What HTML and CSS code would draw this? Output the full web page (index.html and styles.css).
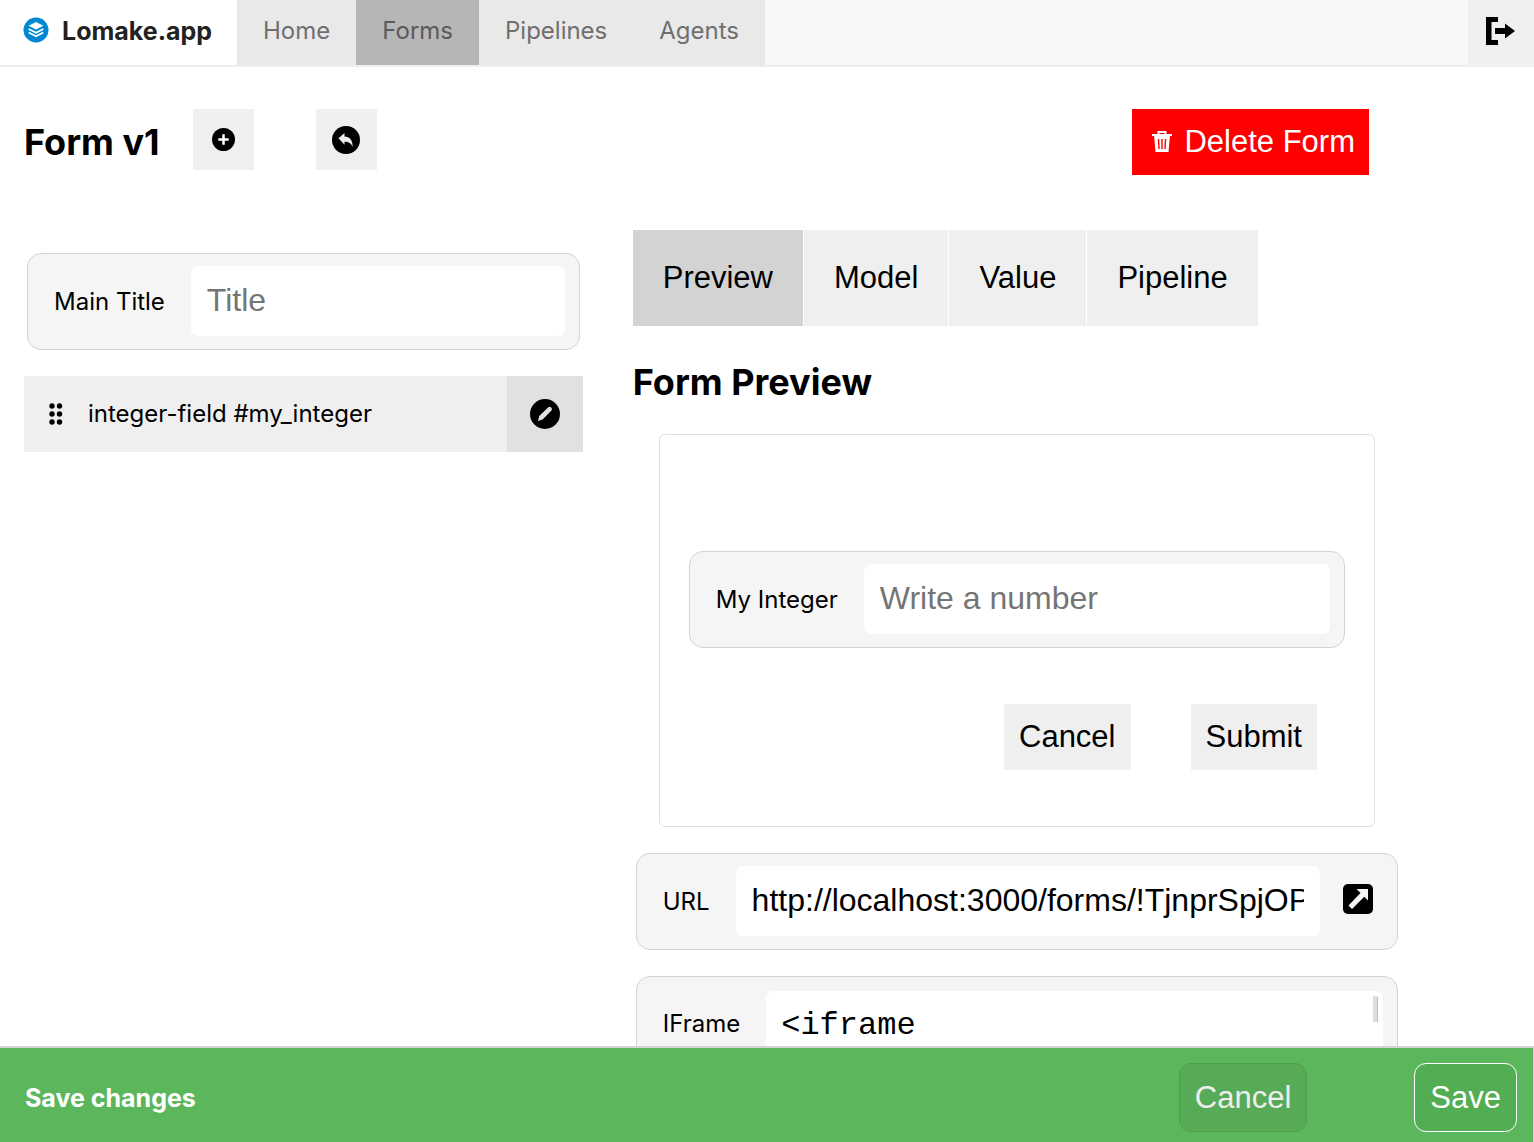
FILE: index.html
```html
<!DOCTYPE html>
<html lang="en">
<head>
<meta charset="utf-8">
<meta name="viewport" content="width=device-width, initial-scale=1">
<title>Lomake.app</title>
<link rel="stylesheet" href="styles.css">
</head>
<body>
<header class="topbar">
  <a class="brand" href="#">
    <svg class="brand-icon" viewBox="0 0 26 26" aria-hidden="true">
      <circle cx="13" cy="13" r="12.5" fill="#0288d1"/>
      <path d="M13 5l7.300 3.800L13 12.600 5.700 8.800z" fill="#fff"/>
      <path d="M5.700 12l7.300 3.800 7.300-3.800M5.700 15.500l7.300 3.800 7.300-3.800" fill="none" stroke="#fff" stroke-width="1.600"/>
    </svg>
    <span>Lomake.app</span>
  </a>
  <nav class="nav">
    <a href="#">Home</a>
    <a class="current" href="#" aria-current="page">Forms</a>
    <a href="#">Pipelines</a>
    <a href="#">Agents</a>
  </nav>
  <button class="logout" type="button" aria-label="Log out">
    <svg viewBox="0 0 30 30" width="30" height="30" aria-hidden="true">
      <path d="M12 1H0v28h12v-5H5.500V6H12zM9 12h10V7.500L29 15l-10 7.500V18H9z"/>
    </svg>
  </button>
</header>

<main class="page">
  <div class="titlebar">
    <h1>Form v1</h1>
    <button class="square add" type="button" aria-label="Add">
      <svg viewBox="0 0 22 22" width="23" height="23" aria-hidden="true">
        <circle cx="11" cy="11" r="11"/>
        <path d="M11 6v10M6 11h10" stroke="#fff" stroke-width="2.400"/>
      </svg>
    </button>
    <button class="square undo" type="button" aria-label="Undo">
      <svg viewBox="0 0 28 28" width="28" height="28" aria-hidden="true">
        <circle cx="14" cy="14" r="14"/>
        <path d="M6.500 12.300L12.500 7v3.500c5 .2 8.500 3.500 8 10.500-1.200-3.800-3.500-5.200-8-5.200v3z" fill="#efefef"/>
      </svg>
    </button>
    <button class="delete" type="button">
      <svg viewBox="0 0 22 24" width="22" height="24" aria-hidden="true">
        <path d="M1 5h20M7.500 4V2h7v2" fill="none" stroke="#fff" stroke-width="2"/>
        <path d="M3 5h16l-1.500 17h-13z" fill="#fff"/>
        <path d="M7.500 9l.5 10M11 9v10M14.500 9l-.5 10" stroke="red" stroke-width="1.400"/>
      </svg>
      <span>Delete Form</span>
    </button>
  </div>

  <div class="columns">
    <section class="editor">
      <div class="field">
        <label for="title">Main Title</label>
        <input id="title" type="text" placeholder="Title">
      </div>
      <div class="item">
        <svg class="grip" viewBox="0 0 16 22" width="16" height="22" aria-hidden="true">
          <circle cx="4" cy="3" r="2.700"/><circle cx="11.500" cy="3" r="2.700"/>
          <circle cx="4" cy="11" r="2.700"/><circle cx="11.500" cy="11" r="2.700"/>
          <circle cx="4" cy="19" r="2.700"/><circle cx="11.500" cy="19" r="2.700"/>
        </svg>
        <span class="item-name">integer-field #my_integer</span>
        <button class="edit" type="button" aria-label="Edit">
          <svg viewBox="0 0 30 30" width="30" height="30" aria-hidden="true">
            <circle cx="15" cy="15" r="15"/>
            <path d="M8 22l1.200-5L18.300 8.300q1.500-1.100 2.900.2t.3 3L12.500 20.500z" fill="#e1e1e1"/>
          </svg>
        </button>
      </div>
    </section>

    <section class="result">
      <div class="tabs" role="tablist">
        <button class="selected" type="button" role="tab" aria-selected="true">Preview</button>
        <button type="button" role="tab" aria-selected="false">Model</button>
        <button type="button" role="tab" aria-selected="false">Value</button>
        <button type="button" role="tab" aria-selected="false">Pipeline</button>
      </div>
      <h2>Form Preview</h2>
      <form class="preview">
        <div class="field">
          <label for="integer">My Integer</label>
          <input id="integer" type="text" inputmode="numeric" placeholder="Write a number">
        </div>
        <div class="actions">
          <button type="button">Cancel</button>
          <button type="submit">Submit</button>
        </div>
      </form>
      <div class="field">
        <label for="url">URL</label>
        <input id="url" type="text" value="http://localhost:3000/forms/!TjnprSpjOP" readonly>
        <a class="open" href="#" aria-label="Open form">
          <svg viewBox="0 0 30 30" width="30" height="30" aria-hidden="true">
            <rect width="30" height="30" rx="5"/>
            <path d="M13.500 5H25v11.500l-3.700-3.700L9 25l-3.500-3.500L17.500 9z" fill="#f5f5f5"/>
          </svg>
        </a>
      </div>
      <div class="field code">
        <label for="iframe">IFrame</label>
        <textarea id="iframe" readonly>&lt;iframe</textarea>
      </div>
    </section>
  </div>
</main>

<footer class="savebar">
  <strong>Save changes</strong>
  <button class="dismiss" type="button">Cancel</button>
  <button class="save" type="button">Save</button>
</footer>
</body>
</html>
```

FILE: styles.css
```css
* {
  box-sizing: border-box;
}

body {
  display: flex;
  flex-direction: column;
  height: 100vh;
  margin: 0;
  background: #fff;
  color: #000;
  font: 24px/32px Inter, sans-serif;
}

button,
input {
  font: 31px/36px "Liberation Sans", Arial, sans-serif;
}

button {
  padding: 0;
  border: 0;
  border-radius: 0;
  background: #efefef;
  color: #000;
}

a {
  color: inherit;
  text-decoration: none;
}

svg {
  display: block;
  flex: none;
}

h1,
h2 {
  margin: 0;
  font-size: 36px;
  line-height: 48px;
  font-weight: 700;
}

/* Top bar */
.topbar {
  display: flex;
  flex: none;
  height: 67px;
  border-bottom: 2px solid #eee;
  background: #f8f8f8;
}

.brand {
  display: flex;
  align-items: center;
  gap: 13px;
  padding: 0 25px 4px 23px;
  background: #fff;
  color: #222;
  font-size: 25px;
  font-weight: 700;
}

.brand-icon {
  width: 26px;
  height: 26px;
  margin-bottom: 2px;
}

.nav {
  display: flex;
  background: #e9e9e9;
  color: #6f6f6f;
}

.nav a {
  display: flex;
  align-items: center;
  padding: 0 26px 4px;
}

.nav .current {
  background: #b6b6b6;
  color: #5a5a5a;
}

.logout {
  width: 66px;
  height: 67px;
  margin-left: auto;
  padding: 0 18px 6px;
}

/* Page */
.page {
  flex: 1;
  min-height: 0;
  padding: 42px 24px 0;
  overflow: auto;
  scrollbar-width: none;
}

.titlebar,
.columns {
  max-width: 1377px;
}

.titlebar {
  display: flex;
  align-items: flex-start;
  padding-right: 32px;
}

.titlebar h1 {
  padding-top: 9px;
  margin-right: 33px;
}

.square {
  display: grid;
  place-items: center;
  width: 61px;
  height: 61px;
}

.undo {
  margin-left: 62px;
}

.delete {
  display: flex;
  align-items: center;
  gap: 11px;
  height: 66px;
  margin-left: auto;
  padding: 0 14px 0 19px;
  background: #f00;
  color: #fff;
}

.columns {
  display: grid;
  grid-template-columns: minmax(0, 8fr) minmax(0, 11fr);
  gap: 50px;
  margin-top: 55px;
}

.editor {
  padding-top: 23px;
}

.field {
  display: flex;
  align-items: center;
  height: 97px;
  margin: 0 3px 26px;
  padding: 0 14px 0 26px;
  border: 1px solid #d3d3d3;
  border-radius: 14px;
  background: #f5f5f5;
}

.field label {
  margin-right: 26px;
  white-space: nowrap;
}

.field input {
  flex: 1;
  min-width: 0;
  height: 70px;
  margin-bottom: 2px;
  padding: 0 16px;
  border: 0;
  border-radius: 7px;
  background: #fff;
  color: #000;
  font-size: 32px;
}

.field input::placeholder {
  color: #757575;
  opacity: 1;
}

.item {
  display: flex;
  align-items: center;
  height: 76px;
  padding-left: 24px;
  background: #efefef;
}

.item-name {
  flex: 1;
  margin-left: 24px;
}

.edit {
  display: grid;
  place-items: center;
  width: 76px;
  height: 76px;
  background: #e1e1e1;
}

.tabs {
  display: flex;
  gap: 1px;
}

.tabs button {
  height: 96px;
  padding: 0 30px;
}

.tabs .selected {
  background: #d3d3d3;
}

.result h2 {
  margin: 32px 0 28px;
}

.preview {
  margin: 0 26px 26px;
  padding: 116px 26px 56px;
  border: 1px solid #e0e0e0;
  border-radius: 6px;
}

.preview .field {
  margin-bottom: 56px;
}

.actions {
  display: flex;
  justify-content: flex-end;
  gap: 60px;
  padding-right: 31px;
}

.actions button {
  height: 66px;
  padding: 0 15px;
}

.open {
  margin: 0 10px 6px 23px;
}

.code {
  align-items: flex-start;
  height: 120px;
  padding-top: 14px;
}

.code label {
  padding-top: 17px;
}

.code textarea {
  flex: 1;
  min-width: 0;
  height: 70px;
  padding: 10px;
  border: 5px solid #fff;
  border-radius: 7px;
  background: linear-gradient(90deg, #ddd 4px, #bbb 4px) right top / 5px 26px no-repeat #fff;
  color: #000;
  font: 32px/40px "Liberation Mono", "Courier New", monospace;
  resize: none;
}

/* Save bar */
.savebar {
  display: flex;
  flex: none;
  align-items: center;
  height: 96px;
  padding: 5px 16px 0 25px;
  border-top: 2px solid #d3d3d3;
  border-right: 1px solid #d3d3d3;
  background: #5cb65c;
  color: #fff;
  font-size: 25px;
}

.savebar button {
  height: 69px;
  padding: 0 15px;
  border: 1px solid #fff;
  border-radius: 12px;
  background: #53ad52;
  color: #fff;
}

.savebar .dismiss {
  margin: 0 107px 0 auto;
  border-color: #4f9e50;
  background: #57ab57;
  color: #eee;
}
```
